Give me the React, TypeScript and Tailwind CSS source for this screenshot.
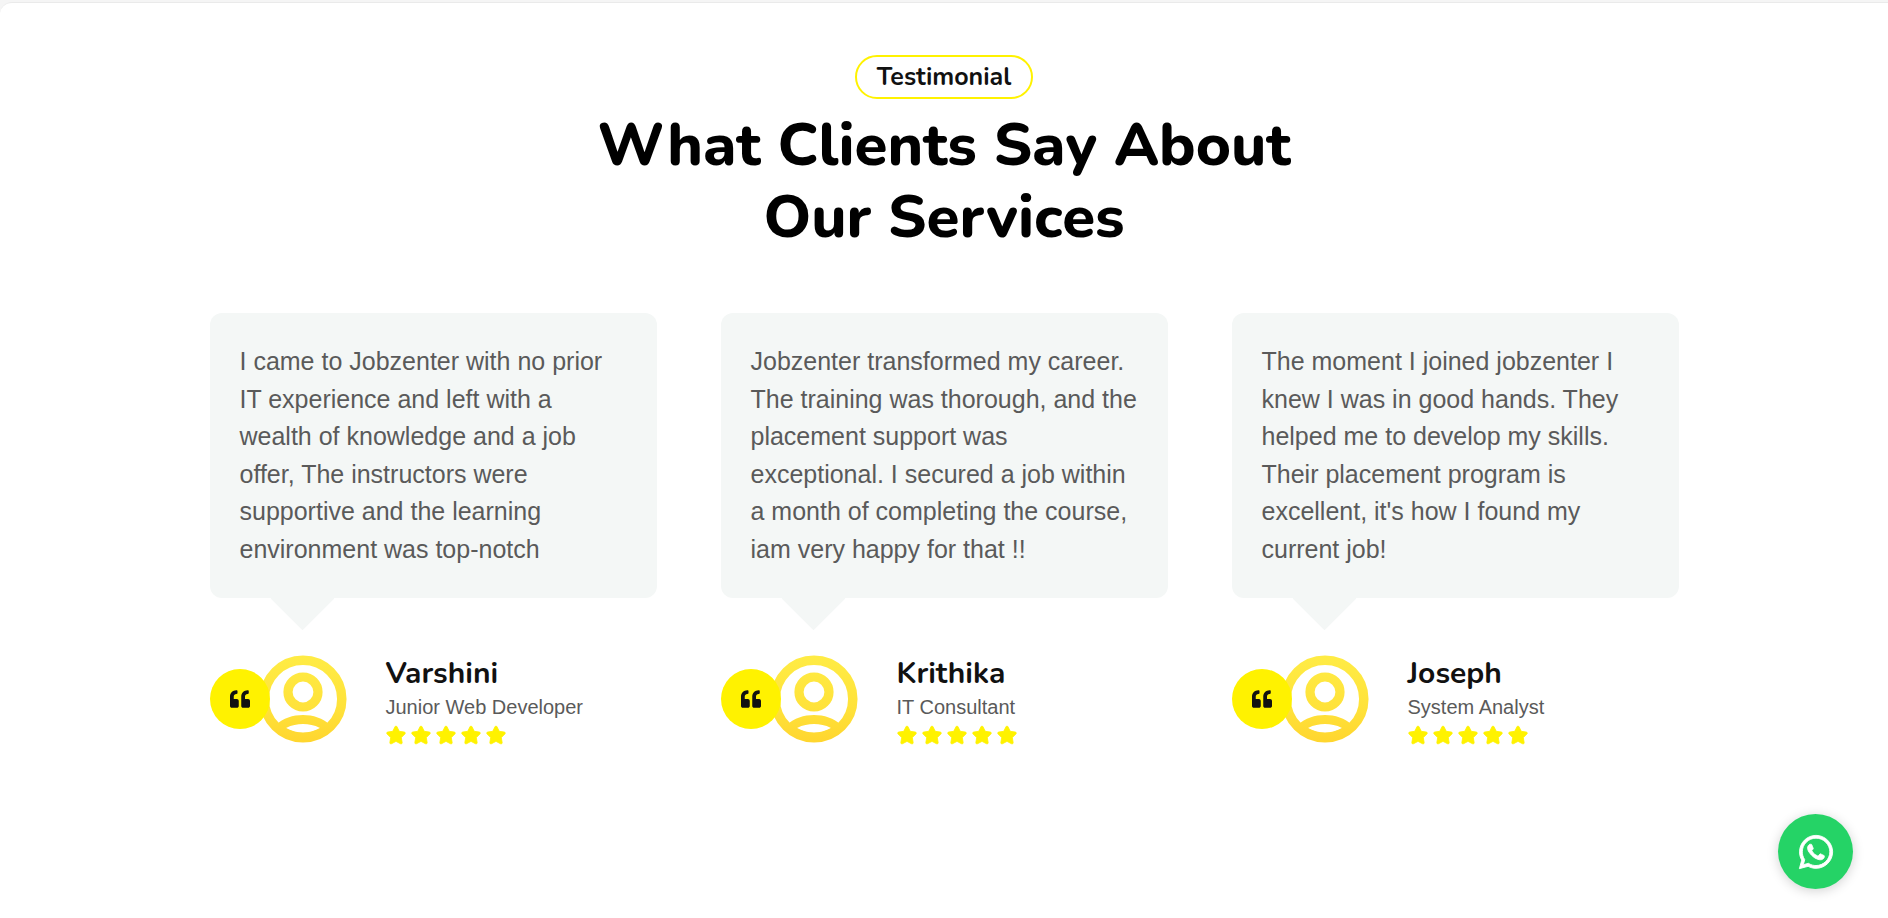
import { FaQuoteLeft, FaStar, FaWhatsapp } from "react-icons/fa";

type Testimonial = {
  id: string;
  quote: string;
  name: string;
  role: string;
};

const testimonials: Testimonial[] = [
  {
    id: "varshini",
    quote:
      "I came to Jobzenter with no prior IT experience and left with a wealth of knowledge and a job offer, The instructors were supportive and the learning environment was top-notch",
    name: "Varshini",
    role: "Junior Web Developer",
  },
  {
    id: "krithika",
    quote:
      "Jobzenter transformed my career. The training was thorough, and the placement support was exceptional. I secured a job within a month of completing the course, iam very happy for that !!",
    name: "Krithika",
    role: "IT Consultant",
  },
  {
    id: "joseph",
    quote:
      "The moment I joined jobzenter I knew I was in good hands. They helped me to develop my skills. Their placement program is excellent, it's how I found my current job!",
    name: "Joseph",
    role: "System Analyst",
  },
];

function Avatar({ id }: { id: string }) {
  const gradient = `avatar-${id}`;
  return (
    <svg viewBox="0 0 90 90" className="-ml-3 size-[90px] shrink-0" aria-hidden="true">
      <defs>
        <linearGradient id={gradient} x1="0" y1="0" x2="0" y2="90" gradientUnits="userSpaceOnUse">
          <stop offset="0" stopColor="#ffec45" />
          <stop offset="0.6" stopColor="#ffe23a" />
          <stop offset="1" stopColor="#ffd52e" />
        </linearGradient>
      </defs>
      <g fill="none" stroke={`url(#${gradient})`}>
        <circle cx="45" cy="45" r="38.8" strokeWidth="9.5" />
        <circle cx="45" cy="38" r="15" strokeWidth="9.2" />
      </g>
      <path
        fill={`url(#${gradient})`}
        fillRule="evenodd"
        d="M18 71C25 64 35 61 45 61C55 61 65 64 72 71L62 83H28ZM28 74C34 71 39 70 45 70C51 70 56 71 62 74C56 77 51 78.500 45 78.500C39 78.500 34 77 28 74Z"
      />
    </svg>
  );
}

function TestimonialCard({ item }: { item: Testimonial }) {
  return (
    <figure className="flex flex-col">
      <blockquote className="relative grow rounded-xl bg-[#f4f7f6] p-[30px] text-[25px] leading-normal text-[#5a5a5a]">
        <p>{item.quote}</p>
        <span className="absolute -bottom-[23px] left-[70px] size-[45px] rotate-45 bg-[#f4f7f6]" />
      </blockquote>
      <figcaption className="mt-14 flex items-center">
        <span className="z-10 flex size-[60px] shrink-0 items-center justify-center rounded-full bg-[#fff200] text-[#111111]">
          <FaQuoteLeft className="size-5" aria-hidden="true" />
        </span>
        <Avatar id={item.id} />
        <div className="ml-[38px] pt-[2px]">
          <h3 className="font-[Nunito,Lato,sans-serif] text-[30px] leading-9 font-bold text-[#111111]">{item.name}</h3>
          <p className="text-xl leading-[30px] text-[#5a5a5a]">{item.role}</p>
          <div className="mt-1 flex gap-[5px] text-[#fff200]" role="img" aria-label="5 out of 5 stars">
            {[1, 2, 3, 4, 5].map((n) => (
              <FaStar key={n} className="h-[18px] w-5 overflow-visible stroke-current stroke-[24px]" />
            ))}
          </div>
        </div>
      </figcaption>
    </figure>
  );
}

export default function App() {
  return (
    <div className="min-h-screen bg-[#f5f5f5] pt-[2px] font-['Liberation_Sans',Arial,sans-serif]">
      <main className="min-h-screen rounded-tl-xl border-t border-[#eaeaea] bg-white px-8 pt-[52px] pb-20">
        <header className="mx-auto flex max-w-[760px] flex-col items-center text-center font-[Nunito,Lato,sans-serif]">
          <p className="rounded-full border-2 border-[#fff200] px-5 py-1 text-[25px] leading-8 font-bold text-[#111111]">
            Testimonial
          </p>
          <h2 className="mt-[10px] text-[60px] leading-[72px] font-extrabold text-black">
            What Clients Say About Our Services
          </h2>
        </header>
        <section className="mx-auto mt-[60px] grid max-w-[1469px] grid-cols-1 gap-16 lg:grid-cols-3">
          {testimonials.map((item) => (
            <TestimonialCard key={item.id} item={item} />
          ))}
        </section>
      </main>
      <a
        href="#whatsapp"
        aria-label="Chat on WhatsApp"
        className="fixed right-[35px] bottom-[29px] flex size-[75px] items-center justify-center rounded-full bg-[#25d366] text-white shadow-[0_2px_12px_rgba(0,0,0,0.18)]"
      >
        <FaWhatsapp className="size-[38px] overflow-visible stroke-white stroke-[12px]" />
      </a>
    </div>
  );
}
